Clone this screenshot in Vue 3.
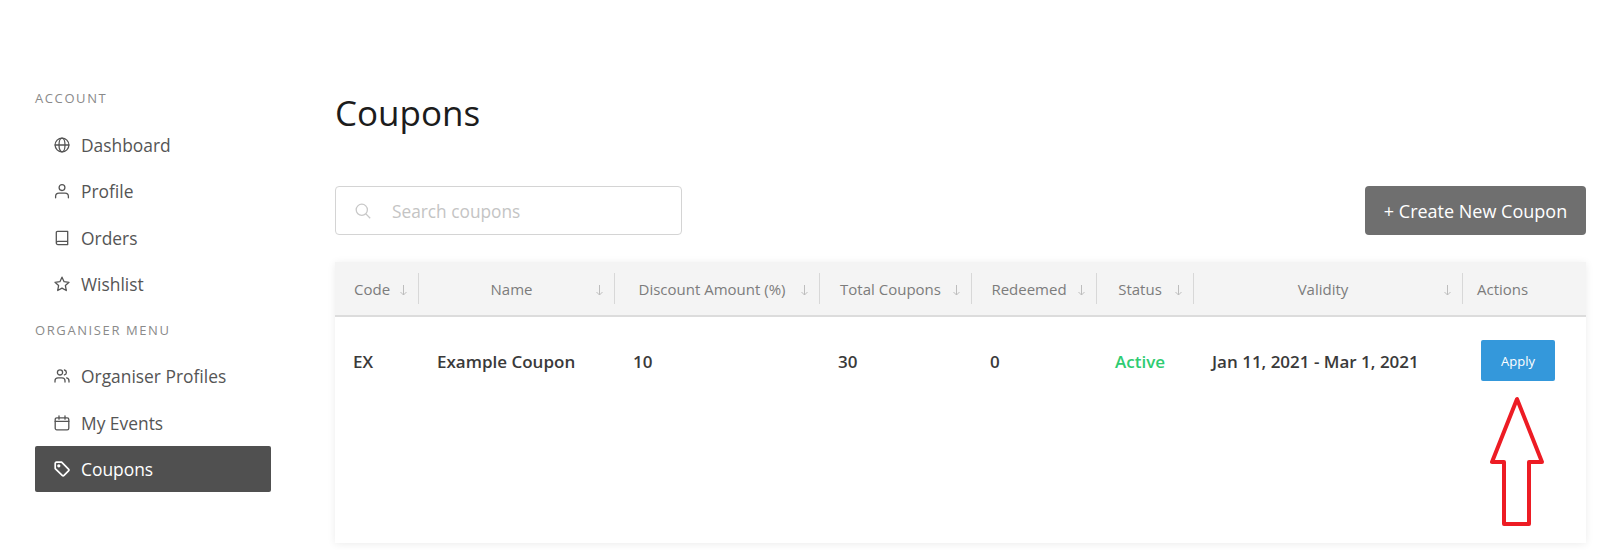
<script setup>
const accountLinks = [
  { label: 'Dashboard', icon: 'globe' },
  { label: 'Profile', icon: 'user' },
  { label: 'Orders', icon: 'book' },
  { label: 'Wishlist', icon: 'star' },
];

const organiserLinks = [
  { label: 'Organiser Profiles', icon: 'users' },
  { label: 'My Events', icon: 'calendar' },
  { label: 'Coupons', icon: 'tag', active: true },
];

const columns = [
  { label: 'Code', width: 84 },
  { label: 'Name', width: 196 },
  { label: 'Discount Amount (%)', width: 205 },
  { label: 'Total Coupons', width: 152 },
  { label: 'Redeemed', width: 125 },
  { label: 'Status', width: 97 },
  { label: 'Validity', width: 269 },
  { label: 'Actions', width: 123, plain: true },
];

const coupons = [
  {
    code: 'EX',
    name: 'Example Coupon',
    discount: '10',
    total: '30',
    redeemed: '0',
    status: 'Active',
    validity: 'Jan 11, 2021 - Mar 1, 2021',
  },
];

const iconPaths = {
  globe: '<circle cx="8" cy="8" r="6.9"/><ellipse cx="8" cy="8" rx="3" ry="6.9"/><path d="M1.1 8h13.8"/>',
  user: '<circle cx="8" cy="4.6" r="2.9"/><path d="M1.6 14.8v-1.4c0-1.9 1.5-3.2 3.4-3.2h6c1.900 0 3.400 1.300 3.400 3.200v1.400"/>',
  book: '<path d="M2.300 13V2.600c0-.7.5-1.200 1.200-1.200h10.200v13.200H3.900c-.9 0-1.600-.7-1.600-1.600s.7-1.600 1.600-1.600h9.800"/>',
  star: '<path d="M8 1.200l2.100 4.500 4.900.6-3.600 3.300.9 4.900L8 12.100l-4.300 2.400.9-4.900L1 6.300l4.900-.6z"/>',
  users: '<circle cx="6" cy="4.400" r="2.600"/><path d="M1 14v-1.200c0-1.800 1.300-3 3-3h4c1.700 0 3 1.200 3 3V14"/><path d="M10.400 2c1.200.3 2 1.300 2 2.400s-.8 2.100-2 2.400"/><path d="M12.600 9.900c1.400.4 2.400 1.500 2.400 3V14"/>',
  calendar: '<rect x="1.200" y="2.800" width="13.600" height="12" rx="1.600"/><path d="M1.200 6.400h13.600M5 .8v3.400M11 .8v3.400"/>',
  tag: '<path d="M1.200 2.400c0-.7.5-1.200 1.200-1.200h5.200l6.900 6.900c.5.5.5 1.300 0 1.800l-4.500 4.500c-.5.5-1.300.5-1.800 0L1.200 7.600z"/><circle cx="4.800" cy="4.800" r=".8"/>',
};
</script>

<template>
  <div class="page">
    <aside class="sidebar">
      <h4 class="menu-title">ACCOUNT</h4>
      <a v-for="link in accountLinks" :key="link.label" class="menu-link">
        <svg class="menu-icon" viewBox="0 0 16 16" v-html="iconPaths[link.icon]"></svg>
        {{ link.label }}
      </a>
      <h4 class="menu-title second">ORGANISER MENU</h4>
      <a
        v-for="link in organiserLinks"
        :key="link.label"
        class="menu-link"
        :class="{ active: link.active }"
      >
        <svg class="menu-icon" viewBox="0 0 16 16" v-html="iconPaths[link.icon]"></svg>
        {{ link.label }}
      </a>
    </aside>

    <main class="content">
      <h1 class="title">Coupons</h1>

      <div class="toolbar">
        <label class="search">
          <svg class="search-icon" viewBox="0 0 16 16">
            <circle cx="6.800" cy="6.800" r="5.600" />
            <path d="M10.900 10.900l4.300 4.300" />
          </svg>
          <input type="text" placeholder="Search coupons" />
        </label>
        <button class="create-btn">+ Create New Coupon</button>
      </div>

      <div class="card">
        <table>
          <colgroup>
            <col v-for="col in columns" :key="col.label" :style="{ width: col.width + 'px' }" />
          </colgroup>
          <thead>
            <tr>
              <th v-for="col in columns" :key="col.label" :class="{ plain: col.plain }">
                <div class="head-cell">
                  <span class="head-label">{{ col.label }}</span>
                  <svg v-if="!col.plain" class="sort" viewBox="0 0 7 11">
                    <path d="M3.500 0v10M.5 7l3 3 3-3" />
                  </svg>
                </div>
              </th>
            </tr>
          </thead>
          <tbody>
            <tr v-for="coupon in coupons" :key="coupon.code">
              <td>{{ coupon.code }}</td>
              <td>{{ coupon.name }}</td>
              <td>{{ coupon.discount }}</td>
              <td>{{ coupon.total }}</td>
              <td>{{ coupon.redeemed }}</td>
              <td class="status">{{ coupon.status }}</td>
              <td>{{ coupon.validity }}</td>
              <td class="action-cell"><button class="apply-btn">Apply</button></td>
            </tr>
          </tbody>
        </table>

        <svg class="arrow" viewBox="0 0 50 125">
          <path d="M25 0L0 63h12v62h25V63h13z" />
        </svg>
      </div>
    </main>
  </div>
</template>

<style>
html,
body {
  margin: 0;
  background: #fff;
}
</style>

<style scoped>
.page {
  display: flex;
  box-sizing: border-box;
  width: 1600px;
  height: 550px;
  overflow: hidden;
  padding: 89px 14px 0 35px;
  font-family: "Open Sans", "Noto Sans", sans-serif;
  color: #555;
}

.sidebar {
  flex: 0 0 236px;
  margin-right: 64px;
}

.menu-title {
  margin: 0 0 15px;
  height: 18px;
  line-height: 18px;
  font-size: 13px;
  font-weight: 400;
  letter-spacing: 1.600px;
  color: #8a8a8a;
}

.menu-title.second {
  margin: 14px 0 14px;
}

.menu-link {
  display: flex;
  align-items: center;
  height: 46.300px;
  padding-left: 19px;
  border-radius: 2px;
  font-size: 17.400px;
  color: #555;
}

.menu-link.active {
  background: #505050;
  color: #fff;
}

.menu-icon {
  flex: none;
  width: 16px;
  height: 16px;
  margin-right: 11px;
  fill: none;
  stroke: currentColor;
  stroke-width: 1.300;
  stroke-linecap: round;
  stroke-linejoin: round;
}

.menu-link.active .menu-icon {
  stroke-width: 1.700;
}

.content {
  flex: 1;
  min-width: 0;
}

.title {
  margin: 0 0 49px;
  height: 48px;
  line-height: 48px;
  font-size: 35px;
  font-weight: 400;
  color: #1c1c1c;
}

.toolbar {
  display: flex;
  justify-content: space-between;
  margin-bottom: 27px;
}

.search {
  display: flex;
  align-items: center;
  box-sizing: border-box;
  width: 347px;
  height: 49px;
  padding-left: 19px;
  border: 1px solid #d4d4d4;
  border-radius: 4px;
  background: #fff;
}

.search-icon {
  flex: none;
  width: 16px;
  height: 16px;
  margin-right: 21px;
  fill: none;
  stroke: #c8c8c8;
  stroke-width: 1.300;
}

.search input {
  flex: 1;
  min-width: 0;
  border: 0;
  outline: 0;
  padding: 1px 0 0;
  background: transparent;
  font: 400 17.300px "Open Sans", "Noto Sans", sans-serif;
}

.search input::placeholder {
  color: #c4c4c4;
  opacity: 1;
}

.create-btn {
  box-sizing: border-box;
  width: 221px;
  height: 49px;
  border: 0;
  border-radius: 4px;
  background: #6f6f6f;
  color: #fff;
  font: 400 18px "Open Sans", "Noto Sans", sans-serif;
}

.card {
  position: relative;
  height: 281px;
  background: #fff;
  box-shadow: 0 1px 8px rgba(0, 0, 0, 0.08);
}

table {
  width: 100%;
  table-layout: fixed;
  border-collapse: collapse;
}

thead tr {
  height: 54px;
  background: #f4f4f4;
  border-bottom: 2px solid #dcdcdc;
}

th {
  padding: 0 0 0 17px;
  font-weight: 400;
  font-size: 15px;
  color: #7c7c7c;
}

th:first-child {
  padding-left: 19px;
}

th.plain {
  padding-left: 14px;
}

.head-cell {
  display: flex;
  align-items: center;
  height: 31px;
  padding-right: 11px;
  border-right: 1px solid #d8d8d8;
}

th.plain .head-cell {
  border-right: 0;
  padding-right: 0;
}

.head-label {
  flex: 1;
  margin-right: 9px;
  text-align: center;
  white-space: nowrap;
}

th:first-child .head-label,
th.plain .head-label {
  flex: none;
  margin-right: 0;
}

th:first-child .head-cell {
  justify-content: space-between;
}

.sort {
  flex: none;
  width: 7px;
  height: 11px;
  margin-top: 4px;
  fill: none;
  stroke: #bdbdbd;
  stroke-width: 1;
}

td {
  height: 87px;
  padding: 0 0 0 18px;
  font-size: 17px;
  font-weight: 600;
  color: #3a3a3a;
  white-space: nowrap;
}

td.status {
  color: #2ecc71;
}

td.action-cell {
  padding-bottom: 2px;
}

.apply-btn {
  width: 74px;
  height: 41px;
  border: 0;
  border-radius: 2px;
  background: #3498db;
  color: #fff;
  font: 500 13px "Open Sans", "Noto Sans", sans-serif;
}

.arrow {
  position: absolute;
  left: 1157px;
  top: 137px;
  width: 50px;
  height: 125px;
  overflow: visible;
  fill: none;
  stroke: #ed1c24;
  stroke-width: 4;
  stroke-linejoin: round;
}
</style>
